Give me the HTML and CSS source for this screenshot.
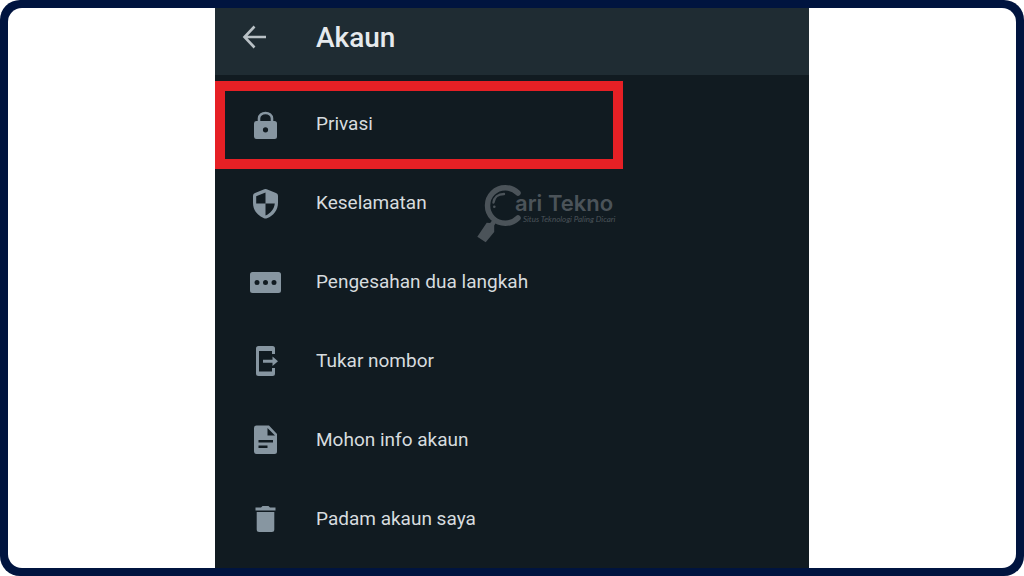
FILE: index.html
```html
<!DOCTYPE html>
<html lang="ms">
<head>
    <meta charset="UTF-8">
    <meta name="viewport" content="width=device-width, initial-scale=1.0">
    <title>Akaun</title>
    <link rel="stylesheet" href="styles.css">
</head>
<body>
    <div class="frame">
        <div class="canvas">
            <main class="screen">
                <header class="topbar">
                    <button type="button" class="back" aria-label="Kembali">
                        <svg viewBox="0 0 36 36"><path d="M29 17H8M17.500 6.500L7.500 17l10 10.500" fill="none" stroke="currentColor" stroke-width="2.600"/></svg>
                    </button>
                    <h1>Akaun</h1>
                </header>

                <nav class="menu">
                    <a href="#privasi" class="item highlight">
                        <svg viewBox="0 0 36 36">
                            <path d="M12 16v-3.500a6.500 5.500 0 0 1 13 0V16" fill="none" stroke="currentColor" stroke-width="2.600"/>
                            <path fill-rule="evenodd" d="M9.500 15h18a2.500 2.500 0 0 1 2.500 2.500v13a2.500 2.500 0 0 1-2.500 2.500h-18A2.500 2.500 0 0 1 7 30.500v-13A2.500 2.500 0 0 1 9.500 15zm9 6.200a2.600 2.600 0 1 0 0 5.200 2.600 2.600 0 0 0 0-5.200z"/>
                        </svg>
                        <span>Privasi</span>
                    </a>
                    <a href="#keselamatan" class="item">
                        <svg viewBox="0 0 36 36">
                            <path fill-rule="evenodd" d="M17.300 4.300q1.200-.5 2.400 0l9.300 3.700q2 .8 2 2.800v7.200c0 7-4.500 12.700-11 15.300q-1.500.6-3 0C10.500 30.700 6 25 6 18v-7.200q0-2 2-2.800zM18.500 7.500L9.200 11.300v7.200h9.300zM18.500 18.500v12c5-2 8.700-6.500 9.300-12z"/>
                        </svg>
                        <span>Keselamatan</span>
                    </a>
                    <a href="#pengesahan" class="item">
                        <svg viewBox="0 0 36 36">
                            <path fill-rule="evenodd" d="M5.500 8h26A2.500 2.500 0 0 1 34 10.500v16a2.500 2.500 0 0 1-2.500 2.500h-26A2.500 2.500 0 0 1 3 26.500v-16A2.500 2.500 0 0 1 5.500 8zM10 16a2.500 2.500 0 1 0 0 5 2.500 2.500 0 0 0 0-5zm8.500 0a2.500 2.500 0 1 0 0 5 2.500 2.500 0 0 0 0-5zm8.500 0a2.500 2.500 0 1 0 0 5 2.500 2.500 0 0 0 0-5z"/>
                        </svg>
                        <span>Pengesahan dua langkah</span>
                    </a>
                    <a href="#nombor" class="item">
                        <svg viewBox="0 0 36 36">
                            <path d="M11.500 3h14A2.500 2.500 0 0 1 28 5.500V11h-3V8H12v20.500h13V25h3v5.500a2.500 2.500 0 0 1-2.500 2.500h-14A2.500 2.500 0 0 1 9 30.500v-25A2.500 2.500 0 0 1 11.500 3z"/>
                            <path d="M16 16.700h9.500V13.500l5.500 4.700-5.500 4.700v-3.200H16z"/>
                        </svg>
                        <span>Tukar nombor</span>
                    </a>
                    <a href="#info" class="item">
                        <svg viewBox="0 0 36 36">
                            <path fill-rule="evenodd" d="M9.500 3.500H22L30 12v17.500a2.500 2.500 0 0 1-2.500 2.500h-18A2.500 2.500 0 0 1 7 29.500V6a2.500 2.500 0 0 1 2.500-2.500zM20.500 6v7.500H28zM11.500 18v2.600h14.500V18zm0 5.500v2.600h9v-2.600z"/>
                        </svg>
                        <span>Mohon info akaun</span>
                    </a>
                    <a href="#padam" class="item">
                        <svg viewBox="0 0 36 36">
                            <path d="M8.500 6.500h5.500l1.500-1.500h6l1.500 1.500h5.500v3h-20zM9.700 11h17.600v17.500a2.500 2.500 0 0 1-2.500 2.500H12.200a2.500 2.500 0 0 1-2.500-2.500z"/>
                        </svg>
                        <span>Padam akaun saya</span>
                    </a>
                </nav>

                <div class="watermark">
                    <svg viewBox="0 0 46 60">
                        <path d="M41 9A17.800 17.800 0 1 0 41 34" fill="none" stroke="currentColor" stroke-width="5.500" stroke-linecap="round"/>
                        <path d="M16.500 18.500c.5-5 4.500-8.500 10.500-8.500" fill="none" stroke="currentColor" stroke-width="2.400" stroke-linecap="round"/>
                        <circle cx="17.300" cy="22.700" r="1.300"/>
                        <path d="M9.700 38.700l3.500.3 3.300-4.500 3.500 2.500-2.800 4.500v6.500L8.700 58.300.3 52.700z"/>
                    </svg>
                    <div class="brand">
                        <strong>ari Tekno</strong>
                        <em>Situs Teknologi Paling Dicari</em>
                    </div>
                </div>
            </main>
        </div>
    </div>
</body>
</html>
```

FILE: styles.css
```css
* {
    box-sizing: border-box;
}
body {
    margin: 0;
    background-color: #ffffff;
    font-family: Roboto, "Liberation Sans", sans-serif;
}
svg {
    display: block;
    fill: currentColor;
}
.frame {
    display: flex;
    min-height: 100vh;
    padding: 8px;
    background-color: #00143f;
    border-radius: 20px;
}
.canvas {
    flex: 1;
    display: flex;
    justify-content: center;
    background-color: #ffffff;
    border-radius: 14px;
}
.screen {
    position: relative;
    display: flex;
    flex-direction: column;
    width: 100%;
    max-width: 594px;
    background-color: #111b21;
}

/* top bar */
.topbar {
    display: flex;
    align-items: center;
    gap: 43px;
    height: 67px;
    padding: 0 22px 8px;
    background-color: #1f2c33;
    color: #e6eaed;
}
.topbar h1 {
    margin: 0;
    font-size: 28px;
    font-weight: 500;
    line-height: 32px;
}
.back {
    width: 36px;
    height: 36px;
    padding: 0;
    border: none;
    background: none;
    color: #b9c1c6;
    cursor: pointer;
}

/* settings list */
.menu {
    flex: 1;
    display: grid;
    grid-auto-rows: 1fr;
    padding: 10px 0;
}
.item {
    position: relative;
    display: flex;
    align-items: center;
    gap: 33px;
    min-height: 56px;
    padding: 0 32px;
    color: #d7dcdf;
    font-size: 19px;
    line-height: 24px;
    text-decoration: none;
}
.item svg {
    width: 36px;
    height: 36px;
    color: #8796a1;
}
.highlight::after {
    content: "";
    position: absolute;
    top: -4px;
    bottom: -5px;
    left: 0;
    box-sizing: border-box;
    width: 408px;
    max-width: 100%;
    border: 10px solid #e62025;
}

/* logo over the list */
.watermark {
    position: absolute;
    top: 176px;
    left: 262px;
    display: flex;
    color: #4b5359;
    pointer-events: none;
}
.watermark svg {
    width: 46px;
    height: 60px;
}
.brand {
    display: flex;
    flex-direction: column;
    margin-left: -8px;
    padding-top: 7px;
}
.brand strong {
    font-family: Inter, sans-serif;
    font-size: 22px;
    font-weight: 600;
    line-height: 24px;
}
.brand em {
    padding-left: 8px;
    font-family: Lato, sans-serif;
    font-size: 8px;
    line-height: 8px;
}
```
